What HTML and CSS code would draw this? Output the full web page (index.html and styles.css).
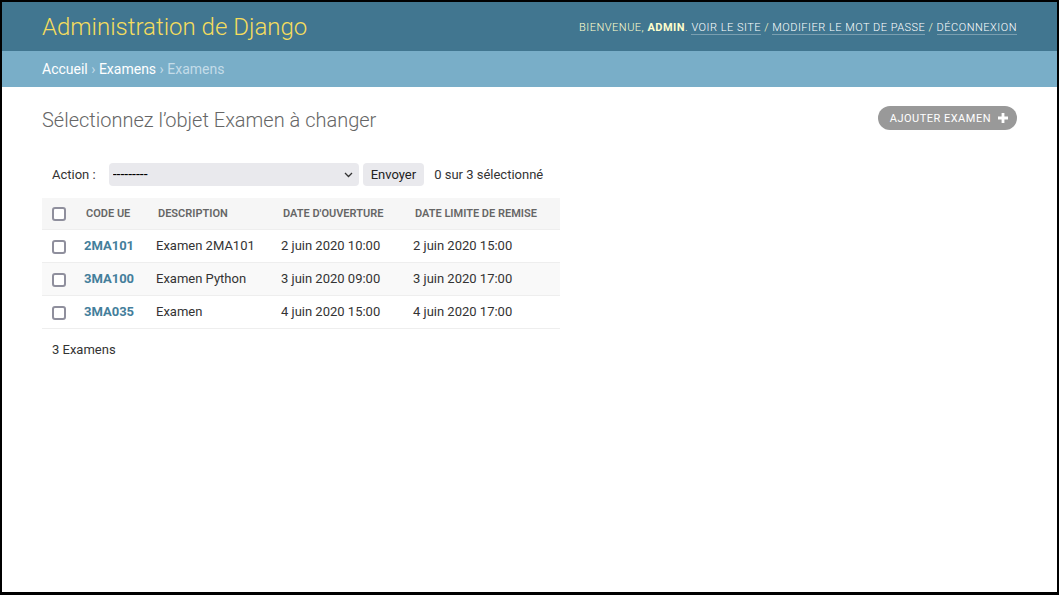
FILE: index.html
```html
<!DOCTYPE html>
<html lang="fr">
<head>
<meta charset="utf-8">
<title>Sélectionnez l'objet Examen à changer</title>
<link rel="stylesheet" href="styles.css">
</head>
<body>
<div class="frame">
  <header class="header">
    <h1 class="branding">Administration de Django</h1>
    <div class="user-tools">
      Bienvenue, <strong>admin</strong>.
      <a href="#">Voir le site</a> /
      <a href="#">Modifier le mot de passe</a> /
      <a href="#">Déconnexion</a>
    </div>
  </header>
  <nav class="breadcrumbs">
    <a href="#">Accueil</a> › <a href="#">Examens</a> › Examens
  </nav>
  <main class="content">
    <div class="title-row">
      <h1 class="page-title">Sélectionnez l’objet Examen à changer</h1>
      <a class="addlink" href="#">Ajouter examen
        <svg class="plus" width="10" height="10" viewBox="0 0 10 10"><path d="M3.6 0h2.8v3.6H10v2.8H6.4V10H3.6V6.4H0V3.6h3.6z" fill="#fff"/></svg>
      </a>
    </div>
    <div class="actions">
      <label class="action-label">Action :</label>
      <span class="select-wrap">
        <select class="action-select">
          <option>---------</option>
        </select>
        <svg class="chev" width="9" height="6" viewBox="0 0 9 6"><path d="M1 1l3.5 3.5L8 1" fill="none" stroke="#333" stroke-width="1.3"/></svg>
      </span>
      <button class="btn" type="button">Envoyer</button>
      <span class="counter">0 sur 3 sélectionné</span>
    </div>
    <table class="results">
      <colgroup>
        <col class="c-check"><col class="c-code"><col class="c-desc"><col class="c-open"><col class="c-limit">
      </colgroup>
      <thead>
        <tr>
          <th class="check"><input type="checkbox" class="cb"></th>
          <th>Code UE</th>
          <th>Description</th>
          <th>Date d'ouverture</th>
          <th>Date limite de remise</th>
        </tr>
      </thead>
      <tbody>
        <tr>
          <td class="check"><input type="checkbox" class="cb"></td>
          <td><a class="rlink" href="#">2MA101</a></td>
          <td>Examen 2MA101</td>
          <td>2 juin 2020 10:00</td>
          <td>2 juin 2020 15:00</td>
        </tr>
        <tr class="alt">
          <td class="check"><input type="checkbox" class="cb"></td>
          <td><a class="rlink" href="#">3MA100</a></td>
          <td>Examen Python</td>
          <td>3 juin 2020 09:00</td>
          <td>3 juin 2020 17:00</td>
        </tr>
        <tr>
          <td class="check"><input type="checkbox" class="cb"></td>
          <td><a class="rlink" href="#">3MA035</a></td>
          <td>Examen</td>
          <td>4 juin 2020 15:00</td>
          <td>4 juin 2020 17:00</td>
        </tr>
      </tbody>
    </table>
    <p class="paginator">3 Examens</p>
  </main>
</div>
</body>
</html>
```
FILE: styles.css
```css
html, body {
  margin: 0;
  padding: 0;
  height: 100%;
}
body {
  font-family: Roboto, "Liberation Sans", sans-serif;
  font-size: 14px;
  color: #333;
  background: #000;
}
.frame {
  box-sizing: border-box;
  height: 100vh;
  border-style: solid;
  border-color: #000;
  border-width: 2px 2px 3px 2px;
  background: #fff;
}
.header {
  display: flex;
  justify-content: space-between;
  align-items: center;
  padding: 10px 40px;
  background: #417690;
  color: #ffc;
}
.branding {
  margin: 0;
  font-size: 24px;
  font-weight: 300;
  line-height: 29px;
  padding-top: 1px;
  margin-bottom: -1px;
  color: #f5dd5d;
}
.user-tools {
  font-size: 11px;
  font-weight: 300;
  letter-spacing: 0.5px;
  text-transform: uppercase;
  line-height: 14px;
  padding-top: 2px;
  color: #ffc;
}
.user-tools strong {
  font-weight: 700;
}
.user-tools a {
  color: #fff;
  text-decoration: none;
  border-bottom: 1px solid rgba(255, 255, 255, 0.3);
}
.breadcrumbs {
  background: #79aec8;
  padding: 10px 40px;
  font-size: 14px;
  line-height: 16px;
  color: #c4dce8;
}
.breadcrumbs a {
  color: #fff;
  text-decoration: none;
}
.content {
  padding: 20px 40px;
}
.title-row {
  display: flex;
  justify-content: space-between;
  align-items: flex-start;
  margin-bottom: 21px;
}
.page-title {
  margin: 0;
  font-size: 20px;
  font-weight: 300;
  line-height: 24px;
  padding-top: 1px;
  margin-bottom: -1px;
  color: #666;
}
.addlink {
  display: flex;
  align-items: center;
  gap: 7px;
  height: 24px;
  margin-top: -1px;
  box-sizing: border-box;
  padding: 0 9px 0 12px;
  background: #999;
  border-radius: 15px;
  color: #fff;
  font-size: 11px;
  letter-spacing: 0.5px;
  text-transform: uppercase;
  text-decoration: none;
}
.actions {
  display: flex;
  align-items: center;
  padding: 10px 10px 12px;
  height: 24px;
  font-size: 13px;
  color: #333;
}
.action-label {
  margin-right: 13px;
}
.select-wrap {
  position: relative;
  display: inline-block;
}
.action-select {
  appearance: none;
  -webkit-appearance: none;
  width: 250px;
  height: 23px;
  border: 0;
  border-radius: 4px;
  background: #e9e9ed;
  font-family: Roboto, "Liberation Sans", sans-serif;
  font-size: 14px;
  color: #000;
  padding: 0 4px;
  display: block;
}
.chev {
  position: absolute;
  right: 6px;
  top: 9px;
  pointer-events: none;
}
.btn {
  margin-left: 4px;
  height: 23px;
  padding: 0 8px;
  border: 0;
  border-radius: 4px;
  background: #e9e9ed;
  font-family: Roboto, "Liberation Sans", sans-serif;
  font-size: 13px;
  color: #222;
}
.counter {
  margin-left: 10px;
}
.results {
  table-layout: fixed;
  width: 518px;
  border-collapse: collapse;
}
.c-check { width: 34px; }
.c-code { width: 72px; }
.c-desc { width: 125px; }
.c-open { width: 132px; }
.c-limit { width: 155px; }
.results th {
  background: #f6f6f6;
  color: #666;
  font-size: 11px;
  font-weight: 600;
  text-transform: uppercase;
  text-align: left;
  padding: 8px 10px;
  line-height: 15px;
  border-bottom: 1px solid #eee;
  white-space: nowrap;
}
.results td {
  font-size: 13px;
  line-height: 16px;
  padding: 8px;
  border-bottom: 1px solid #eee;
  color: #333;
  white-space: nowrap;
}
.results tr.alt td {
  background: #f9f9f9;
}
.results .check {
  padding-left: 0;
  padding-right: 0;
  text-align: center;
}
.cb {
  appearance: none;
  -webkit-appearance: none;
  box-sizing: border-box;
  display: block;
  width: 14px;
  height: 14px;
  margin: 1px auto 0;
  border: 2px solid #8f8f9d;
  border-radius: 3px;
  background: #fff;
}
.rlink {
  color: #447e9b;
  font-weight: 700;
  text-decoration: none;
}
.paginator {
  margin: 0;
  padding: 10px;
  font-size: 13px;
  line-height: 22px;
  color: #333;
}
```
